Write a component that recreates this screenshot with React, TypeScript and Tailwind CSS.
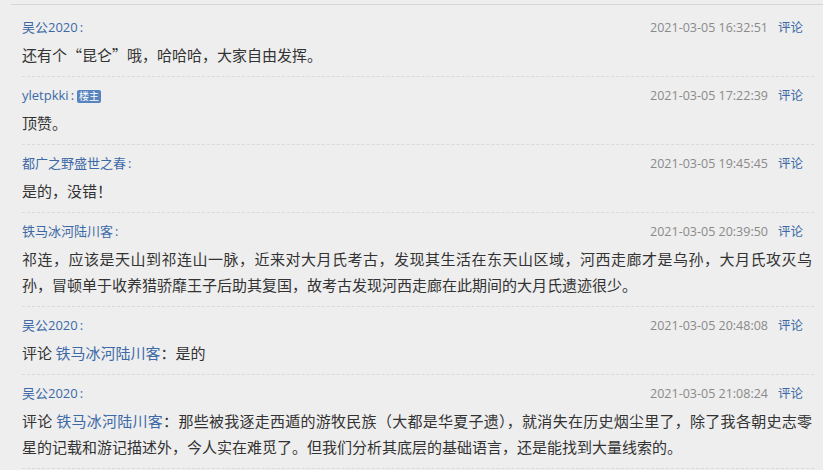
import type { ReactNode } from 'react';

interface Comment {
  name: string;
  owner?: boolean;
  time: string;
  body: ReactNode;
}

function Mention({ to }: { to: string }) {
  return (
    <>
      评论 <span className="text-[#3d6aa7]">{to}</span>：
    </>
  );
}

const comments: Comment[] = [
  { name: '吴公2020', time: '2021-03-05 16:32:51', body: '还有个“昆仑”哦，哈哈哈，大家自由发挥。' },
  { name: 'yletpkki', owner: true, time: '2021-03-05 17:22:39', body: '顶赞。' },
  { name: '都广之野盛世之春', time: '2021-03-05 19:45:45', body: '是的，没错！' },
  {
    name: '铁马冰河陆川客',
    time: '2021-03-05 20:39:50',
    body: '祁连，应该是天山到祁连山一脉，近来对大月氏考古，发现其生活在东天山区域，河西走廊才是乌孙，大月氏攻灭乌孙，冒顿单于收养猎骄靡王子后助其复国，故考古发现河西走廊在此期间的大月氏遗迹很少。',
  },
  {
    name: '吴公2020',
    time: '2021-03-05 20:48:08',
    body: (
      <>
        <Mention to="铁马冰河陆川客" />是的
      </>
    ),
  },
  {
    name: '吴公2020',
    time: '2021-03-05 21:08:24',
    body: (
      <>
        <Mention to="铁马冰河陆川客" />
        那些被我逐走西遁的游牧民族（大都是华夏子遗），就消失在历史烟尘里了，除了我各朝史志零星的记载和游记描述外，今人实在难觅了。但我们分析其底层的基础语言，还是能找到大量线索的。
      </>
    ),
  },
];

export default function App() {
  return (
    <div
      className="min-h-[470px] w-[823px] overflow-hidden bg-[#eeeeee] pt-[4px]"
      style={{ fontFamily: '"Open Sans", "Noto Sans CJK SC", sans-serif' }}
    >
      <div className="ml-[11px] border-t border-[#d6d6d6] pt-[4px]">
        <ul className="ml-[11px] mr-[9px]">
          {comments.map((c, i) => (
            <li key={i} className="border-b border-dashed border-[#d9d9d9] pt-[8px] pb-[8px]">
              <div className="flex h-[22px] items-center justify-between pr-[11px]">
                <div className="flex items-center text-[13px] text-[#3d6aa7]">
                  <span>{c.name}</span>
                  <span className="mx-[2px]">:</span>
                  {c.owner && (
                    <span className="ml-[1px] flex h-[13px] items-center rounded-[2px] bg-[#5784bd] px-[2px] text-[10px] leading-none text-white">
                      楼主
                    </span>
                  )}
                </div>
                <div className="flex items-center gap-[10px] text-[12.5px]">
                  <span className="text-[#8a8a8a]">{c.time}</span>
                  <span className="text-[#3d6aa7]">评论</span>
                </div>
              </div>
              <p
                className="mt-[3px] pr-[2px] text-justify text-[15px] leading-[26px] text-[#333333]"
                style={{ fontFamily: '"Noto Sans CJK SC", sans-serif' }}
              >
                {c.body}
              </p>
            </li>
          ))}
        </ul>
      </div>
    </div>
  );
}
